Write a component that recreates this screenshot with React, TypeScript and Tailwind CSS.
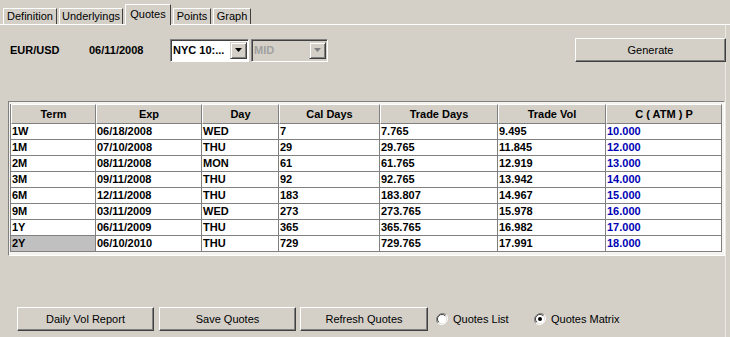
import React from 'react';

const tabs = [
  { label: 'Definition', w: 'w-[54px]' },
  { label: 'Underlyings', w: 'w-[64px]' },
  { label: 'Quotes', w: 'w-[46px]', active: true },
  { label: 'Points', w: 'w-[38px]' },
  { label: 'Graph', w: 'w-[38px]' },
];

const cols = ['Term', 'Exp', 'Day', 'Cal Days', 'Trade Days', 'Trade Vol', 'C ( ATM ) P'];

const rows = [
  ['1W', '06/18/2008', 'WED', '7', '7.765', '9.495', '10.000'],
  ['1M', '07/10/2008', 'THU', '29', '29.765', '11.845', '12.000'],
  ['2M', '08/11/2008', 'MON', '61', '61.765', '12.919', '13.000'],
  ['3M', '09/11/2008', 'THU', '92', '92.765', '13.942', '14.000'],
  ['6M', '12/11/2008', 'THU', '183', '183.807', '14.967', '15.000'],
  ['9M', '03/11/2009', 'WED', '273', '273.765', '15.978', '16.000'],
  ['1Y', '06/11/2009', 'THU', '365', '365.765', '16.982', '17.000'],
  ['2Y', '06/10/2010', 'THU', '729', '729.765', '17.991', '18.000'],
];

const btn =
  'h-[24px] flex items-center justify-center bg-[#d4d0c8] border border-t-white border-l-white border-r-[#404040] border-b-[#404040] shadow-[inset_-1px_-1px_0_#808080] text-[11px] text-black';

const Arrow = ({ disabled }: { disabled?: boolean }) => (
  <div className="w-[17px] h-[17px] flex items-center justify-center bg-[#d4d0c8] border border-t-[#d4d0c8] border-l-[#d4d0c8] border-r-[#404040] border-b-[#404040] shadow-[inset_1px_1px_0_white,inset_-1px_-1px_0_#808080]">
    <svg width="7" height="4" viewBox="0 0 7 4">
      <polygon points="0,0 7,0 3.5,4" fill={disabled ? '#808080' : '#000'} />
    </svg>
  </div>
);

const Radio = ({ checked, label }: { checked?: boolean; label: string }) => (
  <div className="flex items-center gap-[5px]">
    <svg width="12" height="12" viewBox="0 0 12 12">
      <path d="M10.2 1.8 A6 6 0 0 0 1.8 10.2" fill="none" stroke="#808080" strokeWidth="1" />
      <path d="M1.8 10.2 A6 6 0 0 0 10.2 1.8" fill="none" stroke="#ffffff" strokeWidth="1" />
      <circle cx="6" cy="6" r="4.5" fill="#fff" />
      <path d="M9.2 2.8 A4.5 4.5 0 0 0 2.8 9.2" fill="none" stroke="#404040" strokeWidth="1" />
      {checked && <circle cx="6" cy="6" r="2" fill="#000" />}
    </svg>
    <span className="text-[11px]">{label}</span>
  </div>
);

export default function App() {
  return (
    <div className="w-[730px] h-[337px] bg-[#d4d0c8] font-['Liberation_Sans',Arial,sans-serif] text-black overflow-hidden flex flex-col">
      {/* tab strip */}
      <div className="h-[25px] flex items-end pl-[3px] gap-[2px] border-b border-white shrink-0">
        {tabs.map((t) =>
          t.active ? (
            <div
              key={t.label}
              className={`${t.w} h-[21px] -mb-[1px] bg-[#d4d0c8] border-t border-l border-white border-r border-r-[#404040] flex items-center justify-center text-[11px] pb-[1px] relative z-10 whitespace-nowrap`}
            >
              {t.label}
            </div>
          ) : (
            <div
              key={t.label}
              className={`${t.w} h-[16px] bg-[#d4d0c8] border-t border-l border-white border-r border-r-[#404040] flex items-center justify-center text-[11px] whitespace-nowrap`}
            >
              {t.label}
            </div>
          )
        )}
      </div>

      <div className="flex-1 flex flex-col border-r border-[#ebe9e4] mr-[4px]">
        {/* top controls */}
        <div className="mt-[13px] h-[24px] flex items-center pl-[10px]">
          <div className="w-[79px] text-[11px] font-bold">EUR/USD</div>
          <div className="w-[81px] text-[11px] font-bold">06/11/2008</div>
          <div className="w-[79px] h-[23px] bg-white flex items-center justify-between border border-t-[#808080] border-l-[#808080] border-r-white border-b-white shadow-[inset_1px_1px_0_#404040] pl-[2px] pr-[1px]">
            <span className="text-[11px] font-bold">NYC 10:...</span>
            <Arrow />
          </div>
          <div className="ml-[2px] w-[77px] h-[23px] bg-[#d4d0c8] flex items-center justify-between border border-t-[#808080] border-l-[#808080] border-r-white border-b-white shadow-[inset_1px_1px_0_#404040] pl-[2px] pr-[1px]">
            <span className="text-[11px] font-bold text-[#a0a0a0]">MID</span>
            <Arrow disabled />
          </div>
          <div className="flex-1" />
          <div className={`${btn} w-[151px] mr-[-1px]`}>Generate</div>
        </div>

        {/* table frame */}
        <div className="mt-[39px] ml-[8px] w-[717px] h-[155px] border border-t-[#808080] border-l-[#808080] border-r-white border-b-white bg-[#f4f3ef] pl-[1px] pt-[2px]">
          <div className="grid grid-cols-[85px_106px_77px_101px_118px_108px_116px] w-[712px] border-l border-[#808080]">
            {cols.map((c) => (
              <div
                key={c}
                className="h-[20px] flex items-center justify-center text-[11px] font-bold bg-[#d4d0c8] border-t border-l border-white border-r border-b border-r-[#808080] border-b-[#808080]"
              >
                {c}
              </div>
            ))}
            {rows.map((r, ri) =>
              r.map((v, ci) => (
                <div
                  key={`${ri}-${ci}`}
                  className={`h-[16px] flex items-center pl-[1px] text-[11px] font-bold border-r border-b border-[#808080] ${
                    ri === rows.length - 1 && ci === 0 ? 'bg-[#c0c0c0]' : 'bg-white'
                  } ${ci === 6 ? 'text-[#0000b4]' : 'text-black'}`}
                >
                  {v}
                </div>
              ))
            )}
          </div>
        </div>

        {/* bottom buttons */}
        <div className="mt-[51px] h-[24px] flex items-center pl-[17px]">
          <div className={`${btn} w-[137px]`}>Daily Vol Report</div>
          <div className={`${btn} w-[137px] ml-[5px]`}>Save Quotes</div>
          <div className={`${btn} w-[128px] ml-[4px]`}>Refresh Quotes</div>
          <div className="ml-[8px] w-[98px]">
            <Radio label="Quotes List" />
          </div>
          <Radio checked label="Quotes Matrix" />
        </div>
      </div>
    </div>
  );
}
